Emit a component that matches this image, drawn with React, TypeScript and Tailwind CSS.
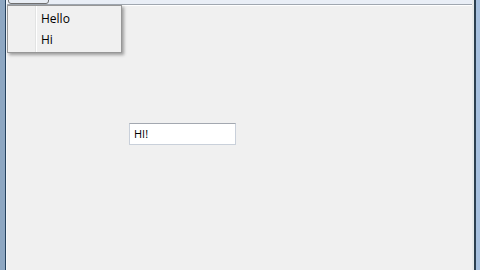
export default function App() {
  return (
    <div
      className="relative flex h-[270px] w-[480px] overflow-hidden bg-[#f0f0f0] text-black"
      style={{ fontFamily: '"Open Sans", "Noto Sans", sans-serif' }}
    >
      {/* left window frame */}
      <div className="w-[5px] bg-[#8ea7c2]" />
      <div className="w-[1px] bg-[#26425e]" />
      <div className="w-[1px] bg-[#f6f8fa]" />

      <div className="flex flex-1 flex-col">
        {/* toolbar strip */}
        <div className="relative h-[4px] bg-[#e9eef6]">
          <div className="absolute left-[1px] top-[-4px] h-[8px] w-[41px] rounded-b-[3px] border border-[#707070] bg-[#e8edf4]" />
        </div>
        <div className="h-[1px] bg-[#a0a7b0]" />
        <div className="h-[1px] bg-white" />

        <div className="flex-1 pl-[122px] pt-[117px]">
          <div className="flex h-[22px] w-[107px] items-center border border-[#c9d0da] border-t-[#a3a8b0] bg-white pl-[4px] text-[11px]">
            HI!
          </div>
        </div>
      </div>

      {/* right window frame */}
      <div className="w-[2px] bg-[#e6eaea]" />
      <div className="w-[2px] bg-[#2b3f4f]" />
      <div className="w-[4px] bg-[#a6c0de]" />

      {/* dropdown menu */}
      <div className="absolute left-[7px] top-[5px] flex h-[48px] w-[115px] border border-[#979797] bg-[#f0f0f0] shadow-[2px_2px_3px_rgba(0,0,0,0.35)]">
        <div className="w-[27px]" />
        <div className="w-[1px] bg-[#e2e3e3]" />
        <div className="w-[1px] bg-white" />
        <div className="flex flex-col pl-[4px] pt-[2px] text-[12px] leading-[21px]">
          <span>Hello</span>
          <span>Hi</span>
        </div>
      </div>
    </div>
  );
}
